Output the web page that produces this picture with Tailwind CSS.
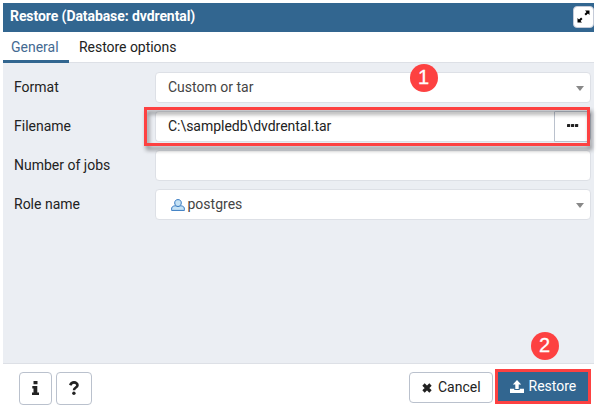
<!DOCTYPE html>
<html lang="en">
<head>
<meta charset="utf-8">
<title>Restore</title>
<script src="https://cdn.jsdelivr.net/npm/@tailwindcss/browser@4"></script>
</head>
<body class="relative w-[597px] h-[411px] overflow-hidden bg-white pt-[3px] pl-[3px] pr-[3px] font-['Roboto',sans-serif] text-[14px] leading-[21px] text-[#222]">
<div class="flex h-[408px] w-[591px] flex-col">
  <header class="flex h-[29px] shrink-0 items-center justify-between bg-[#326690] pl-[7px]">
    <h1 class="relative -top-[1.500px] text-[14px] font-bold tracking-[-0.08px] text-white">Restore (Database: dvdrental)</h1>
    <button class="relative top-[-1px] flex h-[22px] w-[21px] items-center justify-center rounded-[4px] border border-[#c5cbd8] bg-white">
      <svg width="13" height="13" viewBox="0 0 13 13" fill="#000" stroke="#000"><path stroke="none" d="M8 .5h4.500V5zM.5 8v4.500H5z"/><path d="M8.200 4.800 11 2M4.800 8.200 2 11" stroke-width="2"/></svg>
    </button>
  </header>
  <nav class="flex h-[31px] shrink-0 border-b border-[#dde0e6]">
    <div class="h-[31px] w-[66px] border-b-[3px] border-[#326690] pl-[8px] pt-[5px] text-[#446a92]">General</div>
    <div class="pl-[10px] pt-[5px] tracking-[-0.04px]">Restore options</div>
  </nav>
  <main class="flex h-[300px] shrink-0 flex-col gap-[8px] bg-[#ebeef3] pl-[11px] pr-[3px] pt-[9px]">
    <div class="flex h-[31px]">
      <label class="w-[141px] pt-[5px]">Format</label>
      <div class="flex flex-1 items-center justify-between rounded-[4px] border border-[#dde0e6] bg-white pl-[12px] pr-[6px] text-[#444]"><span>Custom or tar</span><svg class="mt-[2px]" width="8" height="5"><path d="M0 0h8L4 5z" fill="#888"/></svg></div>
    </div>
    <div class="flex h-[31px]">
      <label class="w-[141px] pt-[5px]">Filename</label>
      <div class="flex flex-1 items-center rounded-l-[4px] border border-r-0 border-[#dde0e6] bg-white pl-[12px] tracking-[-0.03px]">C:\sampledb\dvdrental.tar</div>
      <button class="flex w-[37px] items-center justify-center rounded-r-[4px] border border-[#bac1cd] bg-white"><svg class="-mt-[2px]" width="12" height="3" fill="#222"><rect width="3.200" height="3" rx=".6"/><rect x="4" width="3.200" height="3" rx=".6"/><rect x="8" width="3.200" height="3" rx=".6"/></svg></button>
    </div>
    <div class="flex h-[31px]">
      <label class="w-[141px] pt-[5px]">Number of jobs</label>
      <div class="flex-1 rounded-[4px] border border-[#dde0e6] bg-white"></div>
    </div>
    <div class="flex h-[31px]">
      <label class="w-[141px] pt-[5px]">Role name</label>
      <div class="flex flex-1 items-center rounded-[4px] border border-[#dde0e6] bg-white pl-[15px] pr-[6px] text-[#444]">
        <svg class="mr-[2.500px] mt-[1px]" width="14" height="12" viewBox="0 0 14 12" fill="#c5e2f5" stroke="#3478c0"><path d="M.6 11.400V10.200c0-2 .8-3 3.200-3.400h6.400c2.400.4 3.200 1.400 3.200 3.400v1.200z"/><path d="M7 .6C4.800.6 3.700 2 3.700 3.900c0 1.900 1.500 3.600 3.300 3.600s3.300-1.700 3.300-3.600C10.300 2 9.200.6 7 .6z"/></svg>
        <span class="flex-1">postgres</span><svg class="mt-[2px]" width="8" height="5"><path d="M0 0h8L4 5z" fill="#888"/></svg>
      </div>
    </div>
  </main>
  <footer class="flex flex-1 items-start border-t border-[#dde0e6] pl-[16px] pt-[8px]">
    <button class="flex h-[33px] w-[33px] items-center justify-center rounded-[4px] border border-[#bac1cd]"><svg class="-mt-[2px]" width="7" height="14" viewBox="0 0 7 14" fill="#222"><path d="M1.500 0h4v3.200h-4zM.3 5h5v6.500H7V14H0v-2.500h1.500V7.500H.3z"/></svg></button>
    <button class="ml-[4px] flex h-[33px] w-[36px] items-center justify-center rounded-[4px] border border-[#bac1cd]"><svg class="-mt-[2px]" width="10" height="14" viewBox="0 0 10 14"><path d="M1.200 4.300C1.900 2.500 3 1.400 5 1.400c2 0 3.500 1.100 3.500 2.800C8.500 6.600 5 6.400 5 9.200" fill="none" stroke="#222" stroke-width="2.600"/><circle cx="4.900" cy="12.200" r="1.700" fill="#222"/></svg></button>
    <button class="ml-auto flex h-[31px] w-[84px] items-center rounded-[4px] border border-[#bac1cd] pl-[12px]"><svg class="mr-[6px]" width="10" height="10" viewBox="0 0 10 10"><path d="M1.500 1.500l7 7M8.500 1.500l-7 7" stroke="#222" stroke-width="3.300"/></svg>Cancel</button>
    <button class="ml-[2px] mr-[3px] -mt-[3px] flex h-[35px] w-[96px] items-center border-[3px] border-[#fd4141] bg-[#326690] pl-[12px] text-white"><svg class="mr-[4.500px]" width="14" height="13" viewBox="0 0 14 13" fill="#fff"><path d="M7 0l4.200 4.600H8.700V9H5.300V4.600H2.800zM0 8.800h4.300V10h5.400V8.800H14V13H0z"/></svg>Restore</button>
  </footer>
</div>
<div class="absolute left-[144px] top-[107px] h-[39px] w-[446px] border-[3px] border-[#fd4141] drop-shadow-[2px_4px_2px_rgba(0,0,0,0.45)]"></div>
<div class="absolute left-[409.500px] top-[63.500px] flex h-[28px] w-[28px] items-center justify-center rounded-full bg-[#fd4141] font-['Liberation_Sans',sans-serif] text-[20px] text-white [-webkit-text-stroke:0.3px_white]">1</div>
<div class="absolute left-[530.500px] top-[331.500px] flex h-[28px] w-[28px] items-center justify-center rounded-full bg-[#fd4141] font-['Liberation_Sans',sans-serif] text-[20px] text-white [-webkit-text-stroke:0.3px_white]">2</div>
</body>
</html>
